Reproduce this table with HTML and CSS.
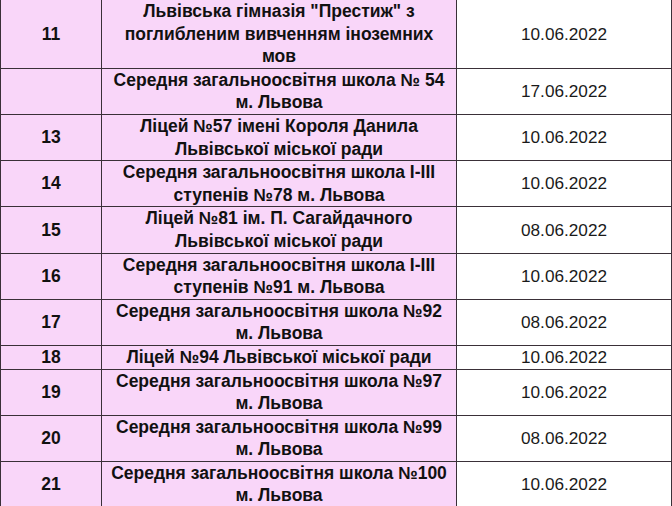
FILE: index.html
```html
<!DOCTYPE html>
<html lang="uk">
<head>
<meta charset="utf-8">
<link rel="stylesheet" href="styles.css">
</head>
<body>
<table class="schools">
  <colgroup><col class="c-num"><col class="c-name"><col class="c-date"></colgroup>
  <tbody>
    <tr><td class="num">11</td><td class="name">Львівська гімназія "Престиж" з поглибленим вивченням іноземних мов</td><td class="date">10.06.2022</td></tr>
    <tr><td class="num"></td><td class="name">Середня загальноосвітня школа № 54<br>м. Львова</td><td class="date date-low">17.06.2022</td></tr>
    <tr><td class="num">13</td><td class="name">Ліцей №57 імені Короля Данила<br>Львівської міської ради</td><td class="date">10.06.2022</td></tr>
    <tr><td class="num">14</td><td class="name">Середня загальноосвітня школа І-ІІІ<br>ступенів №78 м. Львова</td><td class="date">10.06.2022</td></tr>
    <tr><td class="num">15</td><td class="name">Ліцей №81 ім. П. Сагайдачного<br>Львівської міської ради</td><td class="date">08.06.2022</td></tr>
    <tr><td class="num">16</td><td class="name">Середня загальноосвітня школа І-ІІІ<br>ступенів №91 м. Львова</td><td class="date">10.06.2022</td></tr>
    <tr><td class="num">17</td><td class="name">Середня загальноосвітня школа №92<br>м. Львова</td><td class="date">08.06.2022</td></tr>
    <tr><td class="num">18</td><td class="name">Ліцей №94 Львівської міської ради</td><td class="date">10.06.2022</td></tr>
    <tr><td class="num">19</td><td class="name">Середня загальноосвітня школа №97<br>м. Львова</td><td class="date">10.06.2022</td></tr>
    <tr><td class="num">20</td><td class="name">Середня загальноосвітня школа №99<br>м. Львова</td><td class="date date-low">08.06.2022</td></tr>
    <tr><td class="num">21</td><td class="name">Середня загальноосвітня школа №100<br>м. Львова</td><td class="date date-low">10.06.2022</td></tr>
  </tbody>
</table>
</body>
</html>
```

FILE: styles.css
```css
html, body {
  margin: 0;
  padding: 0;
  background: #ffffff;
}

.schools {
  border-collapse: collapse;
  table-layout: fixed;
  width: 671px;
  margin-top: -1px;
  font-family: "Liberation Sans", Arial, sans-serif;
  color: #111111;
}

.c-num { width: 101px; }
.c-name { width: 355px; }
.c-date { width: 215px; }

.schools td {
  border: 1px solid #3a3038;
  padding: 0 4px;
  text-align: center;
  vertical-align: middle;
  line-height: 22.6px;
}

.num, .name {
  background: #f9d6f9;
  font-weight: bold;
  font-size: 17.5px;
}

.date {
  background: #ffffff;
  font-size: 17.2px;
  font-weight: normal;
  color: #1a1a1a;
}

.date-low {
  padding-top: 3px;
}
```
